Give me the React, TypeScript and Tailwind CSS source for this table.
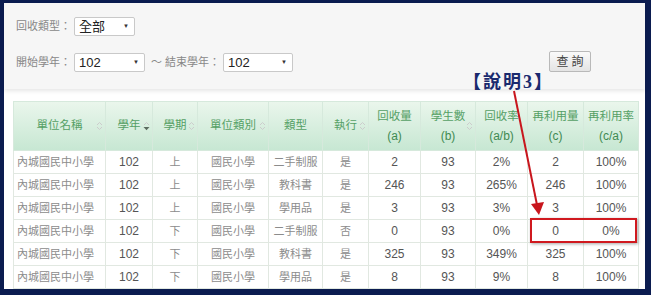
import React from 'react';

type Col = {
  label: string;
  sub?: string;
  width: number;
  sort?: 'none' | 'desc';
};

const cols: Col[] = [
  { label: '單位名稱', width: 92, sort: 'none' },
  { label: '學年', width: 47, sort: 'desc' },
  { label: '學期', width: 45, sort: 'none' },
  { label: '單位類別', width: 71, sort: 'none' },
  { label: '類型', width: 54 },
  { label: '執行', width: 46, sort: 'none' },
  { label: '回收量', sub: '(a)', width: 52 },
  { label: '學生數', sub: '(b)', width: 55, sort: 'none' },
  { label: '回收率', sub: '(a/b)', width: 52 },
  { label: '再利用量', sub: '(c)', width: 56 },
  { label: '再利用率', sub: '(c/a)', width: 55 },
];

const rows: string[][] = [
  ['內城國民中小學', '102', '上', '國民小學', '二手制服', '是', '2', '93', '2%', '2', '100%'],
  ['內城國民中小學', '102', '上', '國民小學', '教科書', '是', '246', '93', '265%', '246', '100%'],
  ['內城國民中小學', '102', '上', '國民小學', '學用品', '是', '3', '93', '3%', '3', '100%'],
  ['內城國民中小學', '102', '下', '國民小學', '二手制服', '否', '0', '93', '0%', '0', '0%'],
  ['內城國民中小學', '102', '下', '國民小學', '教科書', '是', '325', '93', '349%', '325', '100%'],
  ['內城國民中小學', '102', '下', '國民小學', '學用品', '是', '8', '93', '9%', '8', '100%'],
];

const SortIcon = ({ kind }: { kind: 'none' | 'desc' }) => (
  <svg width="7" height="10" viewBox="0 0 7 10">
    <path d="M1 4 L3.5 1.5 L6 4" fill="none" stroke="#cccccc" strokeWidth="1" />
    {kind === 'desc' ? (
      <path d="M0.5 6 L6.5 6 L3.5 9.2 Z" fill="#5b6b5f" />
    ) : (
      <path d="M1 6 L3.5 8.5 L6 6" fill="none" stroke="#cccccc" strokeWidth="1" />
    )}
  </svg>
);

const Select = ({ value, width }: { value: string; width: number }) => (
  <div
    className="h-[19px] bg-white border border-[#c9c9c9] rounded-[2px] flex items-center justify-between pl-[4px] pr-[5px] text-[13px] text-[#222]"
    style={{ width }}
  >
    <span>{value}</span>
    <span className="text-[6px] text-[#333]">▼</span>
  </div>
);

export default function App() {
  const cjk = "font-['Liberation_Sans','Noto_Sans_CJK_TC',sans-serif]";
  return (
    <div className="w-[651px] h-[295px] bg-[#0b1c50] pt-[3px] pl-[4px] pr-[6px] pb-[6px]">
      <div className={`relative h-full bg-white flex flex-col ${cjk}`}>
        {/* filter area */}
        <div className="h-[86px] bg-[#f6f6f6] pl-[12px] pt-[14px] shadow-[0_2px_4px_rgba(0,0,0,0.10)]">
          <div className="flex items-center text-[11px] text-[#888] whitespace-nowrap">
            <span className="w-[58px]">回收類型：</span>
            <Select value="全部" width={61} />
          </div>
          <div className="flex items-center mt-[17px] text-[11px] text-[#888] whitespace-nowrap">
            <span className="w-[58px]">開始學年：</span>
            <Select value="102" width={71} />
            <span className="ml-[6px] w-[72px]">～ 結束學年：</span>
            <Select value="102" width={70} />
            <button className="ml-[256px] -mt-[2px] h-[21px] w-[42px] border border-[#b9b9b9] rounded-[2px] bg-[linear-gradient(#fafafa,#e4e4e4)] text-[12px] text-[#444] tracking-[3px] pl-[3px]">
              查詢
            </button>
          </div>
        </div>

        {/* table panel */}
        <div className="flex-1 pl-[9px] pt-[12px]">
          <table className="border-collapse table-fixed w-[625px]">
            <colgroup>
              {cols.map((c) => (
                <col key={c.label} style={{ width: c.width }} />
              ))}
            </colgroup>
            <thead>
              <tr className="h-[49px] bg-[linear-gradient(#eaf6ec,#c6e7d2)]">
                {cols.map((c) => (
                  <th
                    key={c.label}
                    className="relative border border-[#d6e9dc] p-0 font-normal text-[11.5px] text-[#55a065]"
                  >
                    {c.sub ? (
                      <div className="flex flex-col items-center leading-[20px]">
                        <span className="whitespace-nowrap">{c.label}</span>
                        <span className="text-[12px] text-[#3f8a52]">{c.sub}</span>
                      </div>
                    ) : (
                      <span className="whitespace-nowrap">{c.label}</span>
                    )}
                    {c.sort && (
                      <span className="absolute right-[2px] top-1/2 -translate-y-1/2 flex">
                        <SortIcon kind={c.sort} />
                      </span>
                    )}
                  </th>
                ))}
              </tr>
            </thead>
            <tbody>
              {rows.map((r, i) => (
                <tr key={i} className="h-[23px]">
                  {r.map((v, j) => {
                    const num = /^[0-9%]+$/.test(v);
                    return (
                      <td
                        key={j}
                        className={`border border-[#e1e8e1] p-0 whitespace-nowrap ${
                          j === 0 ? 'text-left pl-[3px]' : 'text-center'
                        } ${num ? 'text-[12px] text-[#555]' : 'text-[11px] text-[#8c8c8c]'}`}
                      >
                        {v}
                      </td>
                    );
                  })}
                </tr>
              ))}
            </tbody>
          </table>
        </div>

        {/* annotation */}
        <div className="absolute left-[459px] top-[66px] text-[18px] font-bold text-[#1a2a6e] tracking-[2px] font-['Liberation_Serif','Noto_Sans_CJK_TC',serif]">
          【說明3】
        </div>
        <svg className="absolute left-0 top-0 pointer-events-none" width="641" height="286">
          <line x1="510" y1="88" x2="533" y2="202" stroke="#c8161d" strokeWidth="2" />
          <path d="M527 201 L540 199 L535 212 Z" fill="#c8161d" />
        </svg>
        <div className="absolute left-[526px] top-[215px] w-[107px] h-[25px] border-2 border-[#d0191f] shadow-[1px_1px_3px_rgba(0,0,0,0.35)]" />
      </div>
    </div>
  );
}
